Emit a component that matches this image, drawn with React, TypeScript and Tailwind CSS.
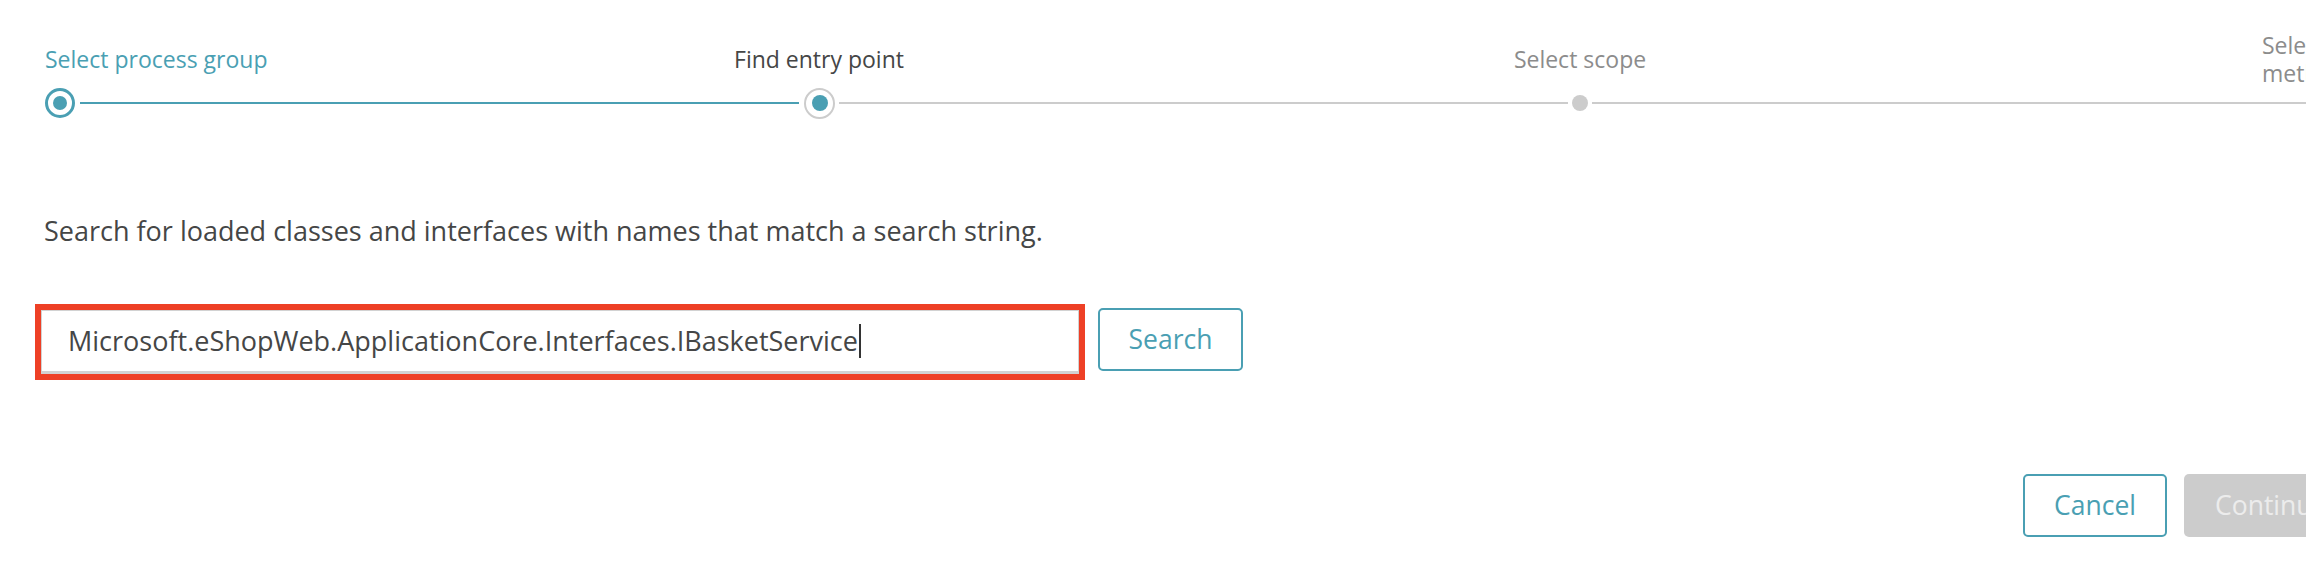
import { Fragment } from 'react'

// Wizard step: "Find entry point" of the custom service setup
function Stepper() {
  return (
    <div className="pt-[34px]">
      {/* step labels */}
      <div className="flex h-[50px] items-center whitespace-nowrap text-[23px]">
        <span className="ml-[45px] w-[300px] shrink-0 text-[#4a9fb3]">Select process group</span>
        <span className="ml-[324px] w-[300px] shrink-0 text-center text-[#454646]">Find entry point</span>
        <span className="ml-[461px] w-[300px] shrink-0 text-center text-[#8c8c8c]">Select scope</span>
        <span className="ml-[532px] shrink-0 leading-[28px] text-[#8c8c8c]">
          Select
          <br />
          methods
        </span>
      </div>

      {/* track */}
      <div className="mt-[4px] flex h-[30px] items-center">
        <div className="ml-[45px] flex h-[30px] w-[30px] shrink-0 items-center justify-center rounded-full border-[3px] border-[#4a9fb3] bg-white">
          <div className="h-[14px] w-[14px] rounded-full bg-[#4a9fb3]" />
        </div>
        <div className="ml-[5px] h-[2px] w-[719px] shrink-0 bg-[#4a9fb3]" />
        <div className="ml-[5px] flex h-[31px] w-[31px] shrink-0 items-center justify-center rounded-full border-2 border-[#cccccc] bg-white">
          <div className="h-[16px] w-[16px] rounded-full bg-[#4a9fb3]" />
        </div>
        <div className="ml-[4px] h-[2px] w-[729px] shrink-0 bg-[#cccccc]" />
        <div className="ml-[4px] h-[16px] w-[16px] shrink-0 rounded-full bg-[#cccccc]" />
        <div className="ml-[4px] h-[2px] w-[800px] shrink-0 bg-[#cccccc]" />
      </div>
    </div>
  )
}

export default function App() {
  const query = 'Microsoft.eShopWeb.ApplicationCore.Interfaces.IBasketService'

  return (
    <div className="h-[570px] w-full overflow-hidden bg-white font-['Open_Sans','Noto_Sans',sans-serif] text-[#454646]">
      <Stepper />

      <p className="mt-[97px] pl-[44px] text-[27px] leading-[32px]">
        Search for loaded classes and interfaces with names that match a search string.
      </p>

      <div className="mt-[57px] flex items-start">
        {/* red highlight around the search field */}
        <div className="ml-[35px] h-[76px] w-[1050px] shrink-0 border-[6px] border-[#ee4026]">
          <div className="flex h-full items-center border border-b-[3px] border-[#d2d2d2] bg-white pl-[26px] text-[27px]">
            <span className="whitespace-nowrap">{query}</span>
            <span className="ml-[1px] h-[34px] w-[2px] bg-[#333333]" />
          </div>
        </div>
        <button className="ml-[13px] mt-[4px] flex h-[63px] w-[145px] shrink-0 items-center justify-center rounded-[5px] border-2 border-[#4a9fb3] bg-white text-[26.5px] text-[#4a9fb3]">
          Search
        </button>
      </div>

      <div className="mt-[94px] flex gap-[17px] pl-[2023px]">
        {[
          { label: 'Cancel', cls: 'border-2 border-[#4a9fb3] bg-white text-[#4a9fb3] w-[144px]' },
          { label: 'Continue', cls: 'bg-[#cccccc] text-[#ececec] w-[180px] pl-[31px] justify-start' },
        ].map((b) => (
          <Fragment key={b.label}>
            <button className={`flex h-[63px] shrink-0 items-center justify-center rounded-[5px] text-[26.5px] ${b.cls}`}>
              {b.label}
            </button>
          </Fragment>
        ))}
      </div>
    </div>
  )
}
